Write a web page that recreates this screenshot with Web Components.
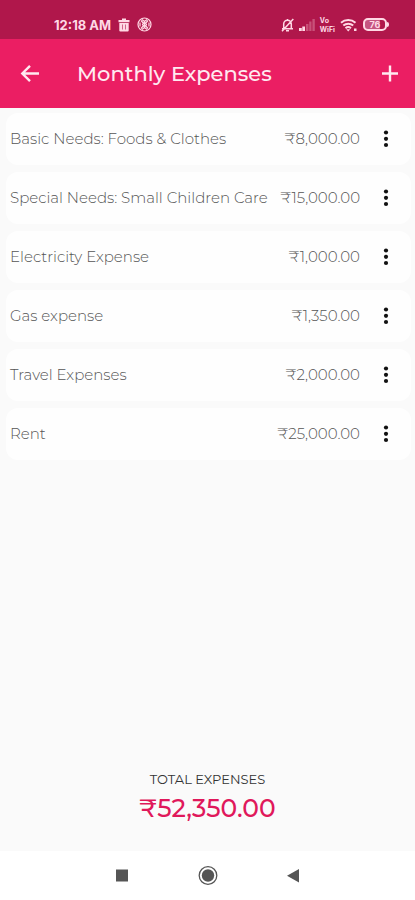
<!DOCTYPE html>
<html lang="en">
<head>
<meta charset="utf-8">
<meta name="viewport" content="width=device-width, initial-scale=1">
<title>Monthly Expenses</title>
<style>
  body { margin: 0; font-family: Montserrat, Inter, "Liberation Sans", sans-serif; background: #fafafa; }
  expense-app { min-height: 100vh; }
</style>
</head>
<body>
<expense-app></expense-app>

<template id="status-bar">
  <style>
    :host { display: flex; align-items: center; box-sizing: border-box; height: 39px; padding: 10px 26px 0 54px; background: #b0174b; color: #ffd9e5; font: 700 13px/16px Inter, sans-serif; }
    .group { display: flex; align-items: center; gap: 7px; }
    .right { margin-left: auto; gap: 5px; }
    .vo { font-size: 7px; line-height: 9px; }
    .vo span { display: block; }
    .battery { display: flex; align-items: center; }
    .cell { box-sizing: border-box; width: 24px; height: 13px; border: 2px solid currentColor; border-radius: 5px; font-size: 9px; line-height: 9px; text-align: center; background: linear-gradient(90deg, #c65580 76%, transparent 76%); }
    .tip { width: 2px; height: 5px; background: currentColor; border-radius: 0 2px 2px 0; }
    svg { display: block; }
  </style>
  <div class="group">
    <span>12:18 AM</span>
    <svg width="12" height="14" viewBox="0 0 12 14" fill="currentColor" aria-hidden="true"><path d="M4 .5h4V2h3.500v2.200H.5V2H4zM1.300 5h9.400v7.500q0 1-1 1H2.300q-1 0-1-1z"/><path d="M4.500 6.500v5M7.500 6.500v5" stroke="#b0174b" stroke-width=".6"/></svg>
    <svg width="15" height="15" viewBox="0 0 15 15" fill="none" stroke="currentColor" stroke-width="1.200" aria-hidden="true"><circle cx="7.500" cy="7.500" r="6.500"/><path d="M4 3.500l7 8M11 3.500l-7 8M5 2.500l2.500 2 2.500-2M5 12.500l2.500-2 2.500 2M3 5.500v4M12 5.500v4"/><path d="M7.500 5l2 2.500-2 2.500-2-2.500z"/></svg>
  </div>
  <div class="group right">
    <svg width="13" height="14" viewBox="0 0 13 14" fill="none" stroke="currentColor" stroke-width="1.500" aria-hidden="true"><path d="M1 10.700h11M2.700 10.500V6a3.800 3.800 0 0 1 7.600 0v4.500M6.500 1v1.500M5 12.800h3M12.300 1L1 13.300"/></svg>
    <svg width="16" height="12" viewBox="0 0 16 12" fill="currentColor" aria-hidden="true"><path d="M0 9h2.800v3H0zM3.300 7.500H6V12H3.300z"/><path opacity=".3" d="M7 5h2.500v7H7zM10.200 2.500h2.300V12h-2.300zM13.400 0h2.400v12h-2.400z"/></svg>
    <div class="vo"><span>Vo</span><span>WiFi</span></div>
    <svg width="18" height="14" viewBox="0 0 18 14" fill="none" stroke="currentColor" stroke-width="2" aria-hidden="true"><path d="M1 4.700a11 11 0 0 1 14.500 0M3.300 7.500a7.500 7.500 0 0 1 9.900 0M5.500 10.200a4.200 4.200 0 0 1 5.500 0"/><path d="M8.250 13.500l-2-2.200h4zM14 10.500h2.500V13H14z" fill="currentColor" stroke="none"/></svg>
    <div class="battery"><div class="cell">76</div><div class="tip"></div></div>
  </div>
</template>

<template id="app-header">
  <style>
    :host { display: flex; align-items: center; box-sizing: border-box; height: 69px; padding: 0 13px 0 18px; background: #eb1e63; color: #ffe9f0; }
    h1 { flex: 1; margin: 0 0 0 35px; font-size: 21px; line-height: 28px; font-weight: 500; white-space: nowrap; }
    button { display: block; width: 24px; height: 24px; padding: 0; border: 0; background: none; color: inherit; }
    svg { display: block; }
  </style>
  <button type="button" aria-label="Back"><svg width="24" height="24" viewBox="0 0 24 24" fill="none" stroke="currentColor" stroke-width="2.400"><path d="M21 11.500H5M12 3.800L4.300 11.500l7.700 7.700"/></svg></button>
  <h1><slot></slot></h1>
  <button type="button" aria-label="Add expense"><svg width="24" height="24" viewBox="0 0 24 24" fill="none" stroke="currentColor" stroke-width="2.400"><path d="M4 11.500h16M12 3.500v16"/></svg></button>
</template>

<template id="expense-item">
  <style>
    :host { display: flex; align-items: center; height: 52px; padding: 0 13px 0 4px; border-radius: 12px; background: #fefefe; color: #555; font-size: 15px; line-height: 20px; font-weight: 300; white-space: nowrap; }
    .name { flex: 1; }
    button { display: grid; place-items: center; width: 24px; height: 32px; margin-left: 14px; padding: 0; border: 0; background: none; color: #111; }
  </style>
  <span class="name"><slot></slot></span>
  <span><slot name="amount"></slot></span>
  <button type="button" aria-label="Expense options"><svg width="6" height="20" viewBox="0 0 6 20" fill="currentColor"><circle cx="3" cy="3.500" r="2.100"/><circle cx="3" cy="9.800" r="2.100"/><circle cx="3" cy="16" r="2.100"/></svg></button>
</template>

<template id="expense-total">
  <style>
    :host { display: block; text-align: center; padding-bottom: 28px; }
    .label { font-size: 13px; line-height: 16px; color: #333; }
    .sum { margin-top: 6px; font-size: 25px; line-height: 30px; font-weight: 500; color: #e0185b; }
  </style>
  <div class="label"><slot></slot></div>
  <div class="sum"><slot name="amount"></slot></div>
</template>

<template id="system-nav">
  <style>
    :host { display: flex; justify-content: center; align-items: center; gap: 62px; height: 49px; background: #fff; color: #555; }
    button { display: grid; place-items: center; width: 24px; height: 24px; padding: 0; border: 0; background: none; color: inherit; }
    svg { display: block; }
  </style>
  <button type="button" aria-label="Recent apps"><svg width="24" height="24" viewBox="0 0 24 24" fill="currentColor"><path d="M6 5.500h12v12H6z"/></svg></button>
  <button type="button" aria-label="Home"><svg width="24" height="24" viewBox="0 0 24 24"><circle cx="12" cy="11.500" r="8.800" fill="none" stroke="currentColor" stroke-width="1.300"/><circle cx="12" cy="11.500" r="6.200" fill="currentColor"/></svg></button>
  <button type="button" aria-label="Back"><svg width="24" height="24" viewBox="0 0 24 24" fill="currentColor"><path d="M17 5v13.500L5 11.700z"/></svg></button>
</template>

<template id="expense-app">
  <style>
    :host { display: flex; flex-direction: column; }
    main { flex: 1; display: flex; flex-direction: column; }
    .list { display: flex; flex-direction: column; gap: 7px; padding: 5px 4px 0 6px; }
    expense-total { margin-top: auto; }
  </style>
  <status-bar></status-bar>
  <app-header>Monthly Expenses</app-header>
  <main>
    <div class="list" role="list">
      <expense-item role="listitem">Basic Needs: Foods &amp; Clothes<span slot="amount">₹8,000.00</span></expense-item>
      <expense-item role="listitem">Special Needs: Small Children Care<span slot="amount">₹15,000.00</span></expense-item>
      <expense-item role="listitem">Electricity Expense<span slot="amount">₹1,000.00</span></expense-item>
      <expense-item role="listitem">Gas expense<span slot="amount">₹1,350.00</span></expense-item>
      <expense-item role="listitem">Travel Expenses<span slot="amount">₹2,000.00</span></expense-item>
      <expense-item role="listitem">Rent<span slot="amount">₹25,000.00</span></expense-item>
    </div>
    <expense-total>TOTAL EXPENSES<span slot="amount">₹52,350.00</span></expense-total>
  </main>
  <system-nav></system-nav>
</template>

<script>
  class TemplateElement extends HTMLElement {
    constructor() {
      super();
      const template = document.getElementById(this.localName);
      this.attachShadow({ mode: "open" }).append(template.content.cloneNode(true));
    }
  }
  for (const name of ["status-bar", "app-header", "expense-item", "expense-total", "system-nav", "expense-app"]) {
    customElements.define(name, class extends TemplateElement {});
  }
</script>
</body>
</html>
